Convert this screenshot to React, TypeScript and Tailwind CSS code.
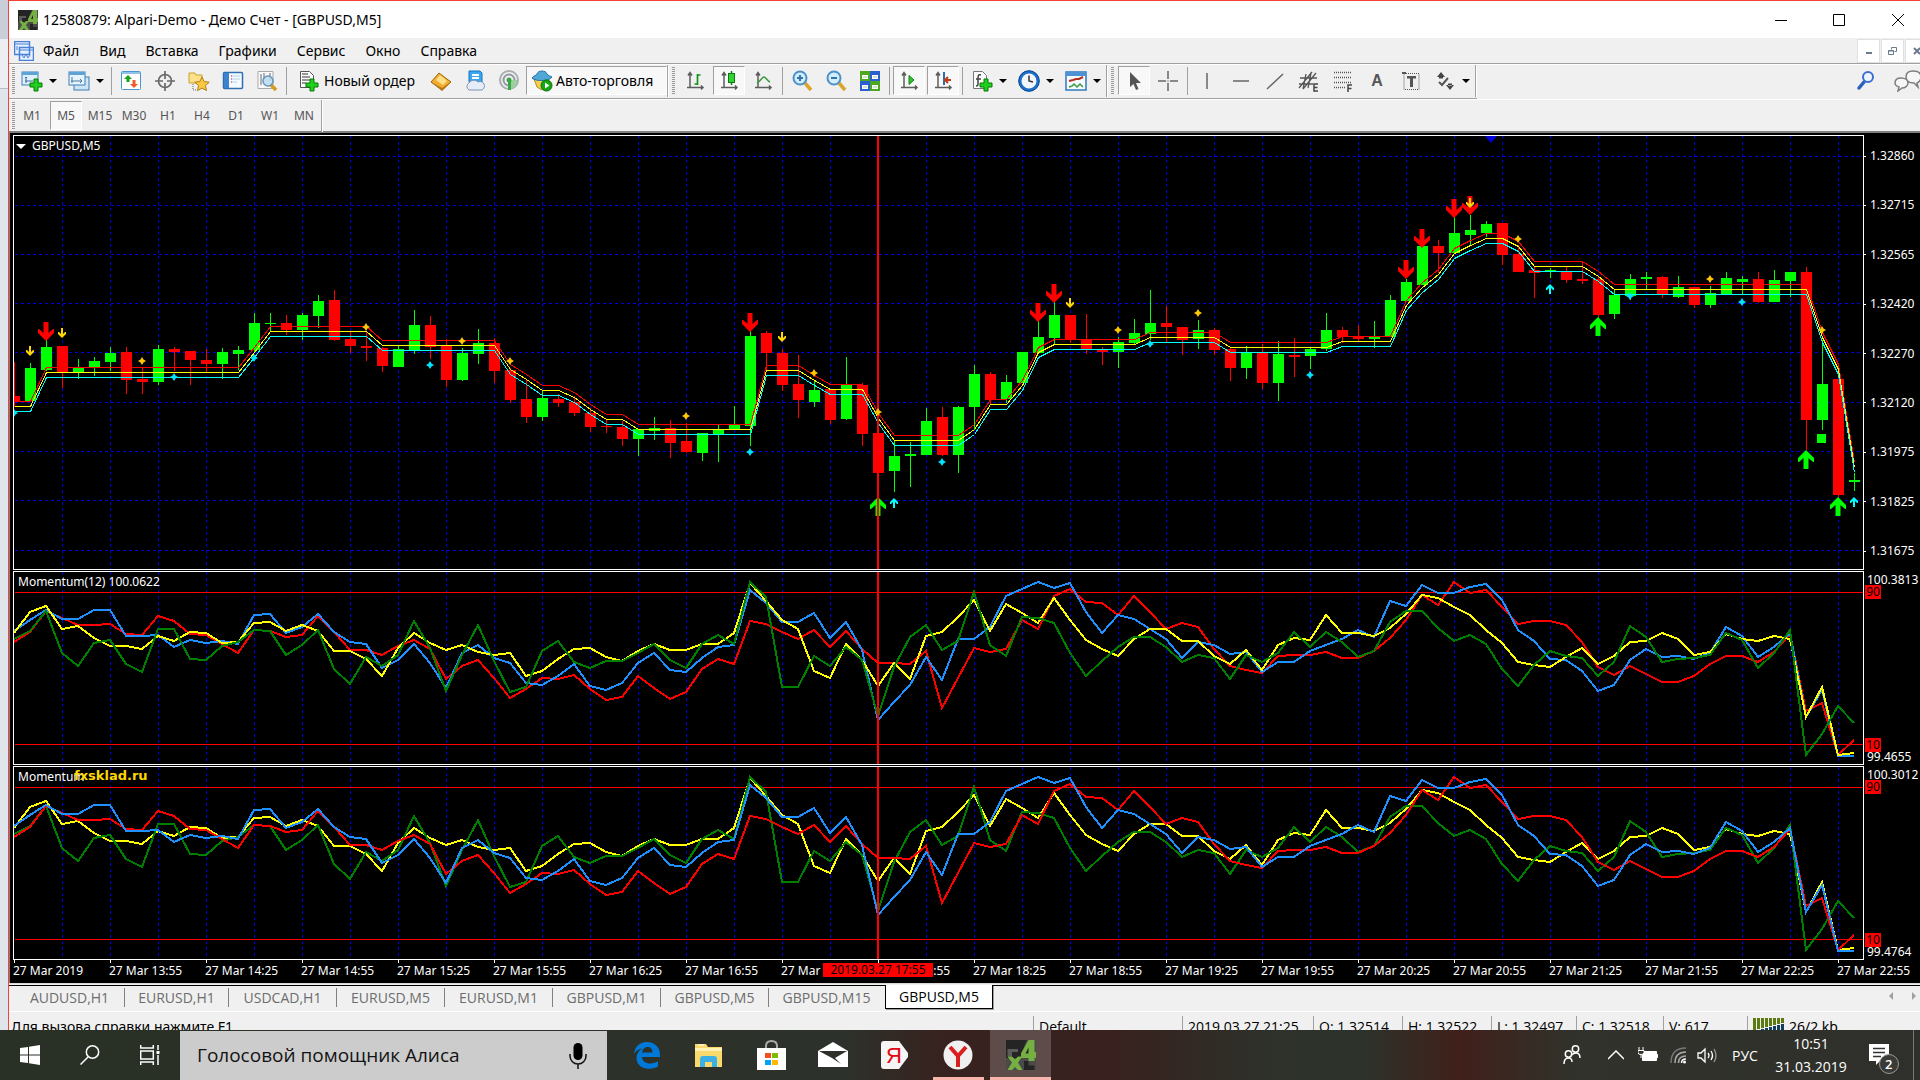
import React from "react";

type Row = [number, number, number, number, number];
type Pt = [number, number];

/* ---------- chart data ---------- */

const BAR = 16;

// up(1)/down(0), wick top, body top, body bottom, wick bottom
const candleGroups: { base: number; rows: Row[] }[] = [
  {
    base: 44,
    rows: [
      [0, 546, 648, 664, 680], [1, 549, 564, 663, 663], [1, 478, 501, 570, 572], [0, 498, 498, 577, 624],
      [1, 537, 562, 576, 597], [1, 531, 543, 562, 588], [1, 501, 519, 546, 573], [0, 501, 516, 600, 642],
      [0, 562, 597, 606, 642], [1, 495, 507, 606, 615], [0, 501, 507, 516, 573], [0, 513, 513, 540, 615],
      [0, 507, 540, 552, 577], [1, 504, 516, 552, 597], [1, 498, 510, 522, 570], [1, 399, 429, 510, 515],
      [1, 399, 429, 432, 455], [0, 405, 429, 450, 465], [1, 399, 405, 450, 480], [1, 345, 363, 408, 444],
      [0, 330, 360, 480, 483], [0, 456, 477, 498, 519], [0, 456, 498, 504, 543], [0, 501, 504, 558, 576],
      [1, 498, 507, 561, 561], [1, 390, 435, 510, 522], [0, 408, 435, 501, 537], [0, 477, 498, 600, 621],
      [1, 504, 519, 600, 603], [1, 447, 489, 522, 552], [0, 474, 489, 573, 609], [0, 564, 570, 660, 669],
      [0, 600, 657, 711, 729], [1, 633, 654, 711, 723], [0, 642, 657, 669, 681], [0, 648, 666, 699, 708],
      [0, 684, 699, 741, 756], [0, 720, 738, 741, 759], [0, 723, 741, 777, 798], [1, 747, 747, 777, 828],
    ],
  },
  {
    base: 104,
    rows: [
      [1, 531, 564, 573, 600], [0, 540, 564, 609, 654], [0, 549, 603, 636, 639], [1, 579, 579, 639, 663],
      [1, 555, 570, 585, 666], [1, 498, 555, 570, 570], [1, 270, 288, 558, 618], [0, 273, 279, 339, 390],
      [0, 327, 339, 435, 453], [0, 345, 432, 480, 534], [1, 420, 450, 486, 501], [0, 447, 447, 540, 552],
      [1, 351, 435, 537, 540], [0, 429, 435, 582, 618], [0, 579, 579, 699, 699], [1, 600, 648, 693, 756],
      [1, 606, 642, 648, 741], [1, 504, 543, 645, 645], [0, 501, 531, 645, 648], [1, 498, 501, 645, 699],
      [1, 375, 402, 501, 570], [0, 396, 402, 480, 495], [1, 405, 426, 477, 490], [1, 336, 336, 430, 430],
      [1, 243, 291, 339, 340], [1, 186, 225, 294, 312], [0, 225, 225, 297, 309], [0, 222, 297, 328, 342],
      [0, 321, 330, 336, 375], [1, 291, 306, 336, 384], [1, 237, 279, 309, 312], [1, 150, 249, 282, 300],
      [0, 198, 249, 261, 305], [0, 261, 261, 300, 345], [1, 240, 270, 297, 327], [0, 264, 270, 330, 345],
      [0, 324, 327, 384, 423], [1, 318, 339, 384, 417], [0, 312, 339, 429, 447], [1, 303, 342, 429, 483],
    ],
  },
  {
    base: -6,
    rows: [
      [0, 624, 675, 681, 741], [1, 652, 657, 678, 717], [1, 549, 600, 657, 663], [0, 591, 600, 621, 640],
      [0, 585, 620, 627, 633], [1, 573, 621, 627, 654], [1, 495, 510, 620, 620], [1, 447, 456, 513, 513],
      [1, 348, 348, 465, 465], [0, 330, 348, 369, 430], [1, 261, 309, 369, 369], [1, 255, 300, 315, 345],
      [1, 273, 282, 309, 320], [0, 279, 279, 375, 405], [0, 345, 372, 426, 426], [0, 408, 420, 429, 504],
      [1, 414, 420, 426, 444], [0, 411, 426, 450, 459], [0, 396, 447, 453, 462], [0, 440, 447, 555, 564],
      [1, 480, 495, 552, 567], [1, 432, 447, 498, 510], [1, 426, 441, 447, 480], [0, 438, 441, 495, 504],
      [1, 438, 471, 501, 504], [0, 471, 471, 525, 534], [1, 468, 489, 525, 534], [1, 426, 444, 492, 495],
      [1, 438, 447, 456, 495], [0, 426, 447, 516, 519], [1, 420, 450, 516, 516], [1, 426, 426, 453, 501],
      [0, 411, 426, 870, 960], [1, 630, 762, 870, 900], [0, 747, 747, 1095, 1101], [1, 1030, 1050, 1056, 1083],
    ],
  },
];

const candles = candleGroups.flatMap((g) =>
  g.rows.map(([up, a, b, c, d]) => ({
    up: up === 1,
    high: Math.round(g.base + a / 3),
    top: Math.round(g.base + b / 3),
    bottom: Math.round(g.base + c / 3),
    low: Math.round(g.base + d / 3),
  }))
);

// bar index, level of the middle line
const ribbon: Pt[] = [
  [0, 270], [1, 270], [2, 236], [14, 236], [15, 216], [16, 195], [22, 195], [23, 209], [30, 209], [31, 233],
  [32, 243], [33, 254], [34, 254], [35, 261], [36, 273], [37, 283], [38, 283], [39, 293], [46, 293], [47, 234],
  [49, 234], [50, 244], [51, 253], [53, 253], [54, 282], [55, 304], [59, 304], [60, 293], [61, 268], [62, 268],
  [63, 249], [64, 216], [65, 208], [70, 208], [71, 201], [75, 201], [76, 211], [82, 211], [83, 205], [86, 205],
  [87, 169], [88, 151], [89, 138], [90, 117], [91, 109], [92, 102], [93, 102], [94, 110], [95, 130], [98, 130],
  [99, 140], [100, 153], [112, 153], [113, 201], [114, 233], [115, 331],
];

const sellArrows: Pt[] = [[2, 205], [46, 196], [64, 186], [65, 167], [87, 143], [88, 112], [90, 82], [91, 79]];
const buyArrows: Pt[] = [[54, 361], [99, 181], [112, 314], [114, 361]];
const smallSell: Pt[] = [[1, 220], [3, 202], [48, 206], [66, 172], [91, 72]];
const smallBuy: Pt[] = [[55, 362], [96, 148], [115, 361]];
const goldStars: Pt[] = [
  [8, 225], [22, 191], [28, 205], [31, 225], [42, 280], [50, 237], [54, 276], [69, 194], [74, 177], [94, 103], [106, 143], [113, 194],
];
const aquaStars: Pt[] = [
  [0, 277], [10, 241], [15, 222], [26, 229], [46, 316], [58, 326], [71, 208], [81, 239], [101, 160], [108, 166],
];

const momentum = {
  blue: [
    212, 180, 150, 177, 177, 150, 150, 228, 228, 224, 260, 239, 248, 243, 252, 165, 161, 220, 200, 161, 216, 247, 252, 324, 300, 251, 308, 383, 280, 254,
    295, 310, 368, 375, 347, 311, 377, 390, 370, 308, 278, 329, 336, 293, 262, 254, 90, 130, 185, 186, 158, 235, 185, 270, 481, 427, 374, 292, 359, 237,
    237, 200, 109, 86, 66, 85, 68, 157, 218, 164, 176, 207, 238, 295, 246, 256, 282, 275, 336, 306, 306, 274, 256, 238, 209, 230, 122, 138, 76, 99,
    99, 82, 71, 120, 210, 243, 297, 300, 332, 393, 374, 299, 268, 291, 288, 296, 280, 200, 228, 291, 262, 220, 470, 390, 587, 587,
  ],
  red: [
    246, 216, 152, 175, 194, 195, 191, 221, 225, 167, 184, 222, 226, 253, 280, 210, 213, 231, 224, 167, 216, 269, 270, 285, 257, 239, 268, 357, 318, 299,
    355, 414, 386, 353, 357, 345, 386, 420, 410, 349, 385, 417, 395, 326, 296, 313, 182, 192, 217, 237, 209, 261, 214, 267, 308, 309, 312, 272, 444, 355,
    263, 276, 266, 180, 207, 108, 86, 125, 130, 165, 107, 157, 206, 190, 202, 268, 319, 331, 339, 287, 285, 285, 275, 294, 294, 272, 235, 180, 106, 135,
    66, 99, 90, 140, 192, 183, 183, 195, 247, 322, 345, 317, 341, 366, 366, 348, 311, 288, 288, 307, 275, 222, 453, 428, 585, 541,
  ],
  yellow: [
    219, 155, 137, 207, 198, 235, 257, 258, 267, 229, 243, 217, 218, 248, 247, 189, 185, 213, 194, 212, 272, 273, 297, 347, 265, 218, 248, 270, 255, 276,
    285, 278, 347, 334, 297, 267, 263, 292, 302, 272, 252, 269, 269, 253, 251, 220, 68, 122, 179, 208, 334, 354, 252, 301, 378, 308, 356, 229, 217, 170,
    121, 213, 133, 160, 190, 115, 180, 240, 267, 289, 238, 207, 207, 242, 242, 288, 313, 269, 331, 254, 234, 240, 164, 218, 219, 229, 203, 163, 104, 115,
    142, 166, 211, 250, 307, 314, 321, 291, 264, 312, 287, 245, 244, 218, 236, 286, 276, 223, 236, 243, 227, 236, 470, 380, 585, 579,
  ],
  green: [
    238, 213, 152, 279, 318, 248, 239, 313, 336, 206, 207, 296, 300, 257, 245, 209, 213, 286, 256, 209, 328, 372, 290, 319, 284, 183, 265, 392, 285, 195,
    302, 397, 380, 273, 242, 305, 324, 304, 302, 280, 251, 301, 325, 252, 224, 252, 66, 112, 381, 381, 287, 318, 262, 300, 468, 320, 232, 194, 270, 242,
    96, 254, 288, 170, 175, 189, 278, 348, 303, 261, 231, 230, 260, 305, 284, 294, 357, 284, 307, 278, 215, 261, 215, 247, 291, 273, 186, 152, 153, 205,
    242, 224, 252, 328, 378, 315, 272, 288, 294, 348, 307, 197, 232, 306, 297, 294, 285, 218, 239, 323, 278, 210, 585, 522, 439, 489,
  ],
};

const strokes = { blue: "#1e90ff", red: "#ff0000", yellow: "#ffff00", green: "#008000" };
type Series = keyof typeof momentum;

/* ---------- chart drawing ---------- */

const gridX = Array.from({ length: 38 }, (_, i) => (i + 1) * 48);
const gridY = [20, 69, 118, 167, 216, 266, 315, 364, 414];

function VerticalGrid() {
  return (
    <g stroke="#0000dc" strokeDasharray="3 3">
      {gridX.map((x) => (
        <line key={x} x1={x + 0.5} x2={x + 0.5} y1={0} y2={440} />
      ))}
    </g>
  );
}

const ribbonPoints = (shift: number) => ribbon.map(([i, y]) => `${i * BAR + 0.5},${y + shift + 0.5}`).join(" ");

const BIG = "M0 0L8-8V-12L7-12 2.500-8V-19H-2.500V-8L-7-12-8-12V-8Z";
const SMALL = "M0 0L4-4V-6H3L1-4V-10H-1V-4L-3-6H-4V-4Z";
const STAR = "M0-4L1.500-1.500 4 0 1.500 1.500 0 4-1.500 1.500-4 0-1.500-1.500Z";

function Marks({ pts, d, fill, flip }: { pts: Pt[]; d: string; fill: string; flip?: boolean }) {
  return (
    <g fill={fill}>
      {pts.map(([i, y]) => (
        <path key={i} d={d} transform={`translate(${i * BAR} ${y})${flip ? " scale(1 -1)" : ""}`} />
      ))}
    </g>
  );
}

function PriceChart() {
  return (
    <svg className="block h-full w-full" role="img" aria-label="GBPUSD M5">
      <g shapeRendering="crispEdges">
        <g stroke="#0000dc" strokeDasharray="3 3">
          {gridY.map((y) => (
            <line key={y} x1={1} x2={4000} y1={y + 0.5} y2={y + 0.5} />
          ))}
        </g>
        <VerticalGrid />
        {candles.map((c, i) => (
          <g key={i} fill={c.up ? "#00ff00" : "#ff0000"}>
            <rect x={i * BAR} y={c.high} width={1} height={Math.max(1, c.low - c.high)} />
            <rect x={i * BAR - 5} y={c.top} width={11} height={Math.max(1, c.bottom - c.top)} />
          </g>
        ))}
        <rect x={1803} y={298} width={9} height={9} fill="#00ff00" />
        <g fill="none">
          <polyline points={ribbonPoints(-5)} stroke="#ff0000" />
          <polyline points={ribbonPoints(0)} stroke="#ffff00" />
          <polyline points={ribbonPoints(5)} stroke="#00ffff" />
        </g>
      </g>
      <Marks pts={buyArrows} d={BIG} fill="#00ff00" flip />
      <rect x={863} y={0} width={2} height="100%" fill="#ff0000" />
      <Marks pts={sellArrows} d={BIG} fill="#ff0000" />
      <Marks pts={smallSell} d={SMALL} fill="#ffd700" />
      <Marks pts={smallBuy} d={SMALL} fill="#00ffff" flip />
      <Marks pts={goldStars} d={STAR} fill="#ffc800" />
      <Marks pts={aquaStars} d={STAR} fill="#00e5ff" />
      <path d="M1471 0H1483L1477 7Z" fill="#0000dc" />
    </svg>
  );
}

function MomentumChart({ order, label }: { order: Series[]; label: string }) {
  return (
    <svg className="block h-full w-full" role="img" aria-label={label}>
      <g shapeRendering="crispEdges" fill="none">
        <VerticalGrid />
        <rect x={1} y={20} width="100%" height={1} fill="#ff0000" />
        <rect x={1} y={172} width="100%" height={1} fill="#ff0000" />
        {order.map((name) => (
          <polyline
            key={name}
            points={momentum[name].map((v, i) => `${i * BAR},${Math.round(v / 3) - 12}`).join(" ")}
            stroke={strokes[name]}
            strokeWidth={2}
          />
        ))}
        <rect x={863} y={0} width={2} height="100%" fill="#ff0000" />
      </g>
    </svg>
  );
}

function LevelTag({ children }: { children: string }) {
  return <span className="-ml-0.5 flex h-3.5 w-4 items-center justify-center bg-[#ff0000] text-[12px] text-black">{children}</span>;
}

function MomentumAxis({ max, min }: { max: string; min: string }) {
  return (
    <div className="flex w-14 shrink-0 flex-col justify-between pt-1 pb-[3px] pl-[3px] leading-[10px]">
      <div>
        <div>{max}</div>
        <LevelTag>90</LevelTag>
      </div>
      <div>
        <LevelTag>10</LevelTag>
        <div>{min}</div>
      </div>
    </div>
  );
}

const prices = ["1.32860", "1.32715", "1.32565", "1.32420", "1.32270", "1.32120", "1.31975", "1.31825", "1.31675"];
const times = [
  "2019", "13:55", "14:25", "14:55", "15:25", "15:55", "16:25", "16:55", "17:25", "17:55",
  "18:25", "18:55", "19:25", "19:55", "20:25", "20:55", "21:25", "21:55", "22:25", "22:55",
];

/* ---------- toolbar icons ---------- */

const Svg = ({ children }: { children: React.ReactNode }) => (
  <svg width={22} height={22} viewBox="0 0 22 22" fill="none" className="shrink-0">
    {children}
  </svg>
);

const Plus = ({ x, y }: { x: number; y: number }) => (
  <path transform={`translate(${x} ${y})`} d="M4 0h4v4h4v4H8v4H4V8H0V4h4z" fill="#1fd01f" stroke="#067a06" />
);

const Axes = () => <path d="M6 3v15M3 17.500h16M4 5.500l2-3 2 3M17 15.500l2 2-2 2" stroke="#5c5c5c" strokeWidth={1.500} />;

const icons: Record<string, React.ReactNode> = {
  newChart: (
    <Svg>
      <rect x={1} y={2} width={16} height={13} fill="#dff0fc" stroke="#3b7fb5" />
      <path d="M1 2h16v3H1z" fill="#5ea3d6" />
      <path d="M5 7v6M4 11h8M4 8l1-1 1 1" stroke="#3b6f95" />
      <Plus x={9} y={9} />
    </Svg>
  ),
  profiles: (
    <Svg>
      <rect x={6} y={7} width={15} height={13} fill="#cfe4f5" stroke="#3b7fb5" />
      <rect x={1} y={2} width={16} height={13} fill="#e8f4fd" stroke="#3b7fb5" />
      <path d="M1 2h16v3H1z" fill="#5ea3d6" />
      <path d="M4 7v6M3 11h11M12 9l2 2-2 2" stroke="#48789c" />
    </Svg>
  ),
  market: (
    <Svg>
      <rect x={1.500} y={1.500} width={19} height={18} rx={1} fill="#fff" stroke="#4e96cf" />
      <path d="M2 2h18v2H2z" fill="#8fc3ea" />
      <path d="M8 5l4 4H9.500v3h-3V9H4z" fill="#19a319" />
      <path d="M14 18l4-4h-2.500v-4h-3v4H10z" fill="#ef5a28" />
    </Svg>
  ),
  cross: (
    <Svg>
      <circle cx={11} cy={11} r={6.500} stroke="#6a6a6a" strokeWidth={1.700} />
      <path d="M11 1v8M11 13v8M1 11h8M13 11h8" stroke="#6a6a6a" strokeWidth={1.700} />
    </Svg>
  ),
  navigator: (
    <Svg>
      <path d="M1 3h6l1 2h6v8H1z" fill="#ffe08a" stroke="#caa032" />
      <path d="M5 14v6h3" stroke="#6b6b6b" strokeDasharray="1 1" />
      <path d="M14 7l2.200 4.600 5 .6-3.700 3.400 1 5-4.500-2.500-4.500 2.500 1-5-3.700-3.400 5-.6z" fill="#fbc844" stroke="#b37f12" />
    </Svg>
  ),
  terminal: (
    <Svg>
      <rect x={1.500} y={2.500} width={19} height={16} rx={1} fill="#f4faff" stroke="#2d6fb0" strokeWidth={1.500} />
      <path d="M2 3h5v15H2z" fill="#3c82cc" />
      <path d="M9 6h9M9 9h9M9 12h6" stroke="#b5d0e8" />
      <path d="M9 6h1M9 9h1M9 12h1" stroke="#c33" />
    </Svg>
  ),
  tester: (
    <Svg>
      <path d="M2 1.500h15v17H2z" fill="#fafafa" stroke="#aaa" />
      <path d="M5 4v11M8 3v6M14 3v8" stroke="#667" />
      <path d="M15 15l5 5" stroke="#d49b1f" strokeWidth={3.500} />
      <circle cx={12} cy={11} r={5} fill="#b8dcf5" fillOpacity={0.85} stroke="#6a93b5" strokeWidth={1.500} />
    </Svg>
  ),
  order: (
    <Svg>
      <path d="M3.500 1.500h9l4 4v12h-13z" fill="#fbfbfb" stroke="#555" />
      <path d="M5 4h6M5 7h8M5 10h8M5 13h4" stroke="#777" strokeWidth={1.500} />
      <Plus x={9} y={9} />
    </Svg>
  ),
  editor: (
    <Svg>
      <path d="M1 12l8-9 12 9-9 8z" fill="#efae2f" stroke="#9c6508" />
      <path d="M1 12l11 6 9-6-9 9z" fill="#b87510" />
      <path d="M6 10l4-5 7 6-4 4z" fill="#ffdf8a" />
    </Svg>
  ),
  cloud: (
    <Svg>
      <path d="M5 1h11l2 2v9H5z" fill="#39a8f2" stroke="#1474bd" />
      <path d="M8 5h7M8 8h7" stroke="#fff" strokeWidth={2} />
      <path d="M5 20a4 4 0 0 1 0-7 5 4 0 0 1 9-1 4 4 0 0 1 4 8z" fill="#e4edf8" stroke="#7d93b5" />
    </Svg>
  ),
  signals: (
    <Svg>
      <circle cx={11} cy={10} r={9} stroke="#a9aeb3" strokeWidth={2} />
      <circle cx={11} cy={10} r={5.500} stroke="#93999e" strokeWidth={2} />
      <path d="M13 10h6a8 8 0 0 1-6 9z" fill="#9ccf9e" />
      <circle cx={11} cy={10} r={2.500} fill="#3aa745" />
      <path d="M10 11h3v9h-3z" fill="#3aa745" />
    </Svg>
  ),
  auto: (
    <Svg>
      <path d="M3 9h15l-2 7-5 4-5-3z" fill="#f7cf55" stroke="#b58a1c" />
      <path d="M1 8c2-3 4-2 5-4 1-4 9-4 10 0 1 2 4 2 5 3-2 4-16 5-20 1z" fill="#4fa7d8" stroke="#2475a3" />
      <circle cx={15.500} cy={15.500} r={5.500} fill="#12a812" stroke="#0a6f0a" />
      <path d="M14 12.500l4.500 3-4.500 3z" fill="#fff" />
    </Svg>
  ),
  bars: (
    <Svg>
      <Axes />
      <path d="M13.500 4v11M13.500 5h3M10.500 14h3" stroke="#149414" strokeWidth={1.700} />
    </Svg>
  ),
  candlesIcon: (
    <Svg>
      <Axes />
      <path d="M13.500 1v14" stroke="#0f7a0f" strokeWidth={1.500} />
      <rect x={10.500} y={3.500} width={6} height={9} fill="#2fd52f" stroke="#0f7a0f" />
    </Svg>
  ),
  line: (
    <Svg>
      <Axes />
      <path d="M5 13c4-2 5-6 7-6s3 4 6 5" stroke="#3c9a3c" strokeWidth={1.500} />
    </Svg>
  ),
  zoomIn: (
    <Svg>
      <path d="M14 13l6 7" stroke="#d9a62b" strokeWidth={3.500} />
      <circle cx={9} cy={8} r={6.500} fill="#d5ecfb" stroke="#4a92c9" strokeWidth={2} />
      <path d="M9 5v6M6 8h6" stroke="#2d76ad" strokeWidth={2} />
    </Svg>
  ),
  zoomOut: (
    <Svg>
      <path d="M14 13l6 7" stroke="#d9a62b" strokeWidth={3.500} />
      <circle cx={9} cy={8} r={6.500} fill="#d5ecfb" stroke="#4a92c9" strokeWidth={2} />
      <path d="M6 8h6" stroke="#2d76ad" strokeWidth={2} />
    </Svg>
  ),
  tiles: (
    <Svg>
      <path d="M1 1h10v10H1zM11 11h10v10H11z" fill="#4ca81e" />
      <path d="M11 1h10v10H11zM1 11h10v10H1z" fill="#2a5fd0" />
      <path d="M3 5h6v4H3zM13 5h6v4h-6zM3 15h6v4H3zM13 15h6v4h-6z" fill="#fff" />
      <path d="M4 7h4M14 7h4M4 17h4M14 17h4" stroke="#a8c8a0" />
    </Svg>
  ),
  scroll: (
    <Svg>
      <Axes />
      <path d="M11 5.500l5 4.500-5 4.500z" fill="#2fc52f" stroke="#128212" />
    </Svg>
  ),
  shift: (
    <Svg>
      <Axes />
      <path d="M12 2v13" stroke="#2a6fb0" strokeWidth={2} />
      <path d="M19 10h-6M16 7l-3 3 3 3" stroke="#c23b12" strokeWidth={2} />
    </Svg>
  ),
  indicators: (
    <Svg>
      <path d="M2.500 1.500h9l4 4v13h-13z" fill="#fbfbfb" stroke="#777" />
      <path d="M10 5c-3-1-3 1-3 4v5c0 2-1 2-2 2M5 9h5" stroke="#444" strokeWidth={1.500} />
      <Plus x={9} y={9} />
    </Svg>
  ),
  clock: (
    <Svg>
      <circle cx={11} cy={11} r={9} fill="#f2f7fb" stroke="#1d6fc7" strokeWidth={3} />
      <circle cx={11} cy={11} r={10.300} stroke="#0b4a94" />
      <path d="M11 5.500V11l4 1" stroke="#333" strokeWidth={1.500} />
    </Svg>
  ),
  templates: (
    <Svg>
      <rect x={1} y={2} width={20} height={18} fill="#f5faff" stroke="#2f78bd" strokeWidth={1.500} />
      <path d="M1 2h20v4H1z" fill="#4d93d3" />
      <path d="M4 11l4-1 3-1 3 0 4-2" stroke="#b5311b" strokeWidth={2} />
      <path d="M4 17l3-1 2-2 3 3 3-3 3 3" stroke="#3c9a3c" strokeWidth={1.500} />
    </Svg>
  ),
  cursor: (
    <Svg>
      <path d="M7 2v15l3.500-3 2.500 6 2.500-1-2.500-6h5z" fill="#555" />
    </Svg>
  ),
  plusCross: (
    <Svg>
      <path d="M11 1v8M11 13v8M1 11h8M13 11h8M11 10.500v1" stroke="#666" strokeWidth={1.500} />
    </Svg>
  ),
  vline: <Svg><path d="M11 3v16" stroke="#666" strokeWidth={1.500} /></Svg>,
  hline: <Svg><path d="M3 11h16" stroke="#666" strokeWidth={1.500} /></Svg>,
  trend: <Svg><path d="M3 19L19 4" stroke="#666" strokeWidth={1.500} /></Svg>,
  channel: (
    <Svg>
      <path d="M1 18L14 2M5 19L18 3M2 8h17M1 14h14M8 4l-3 15M13 3l-3 15" stroke="#555" strokeWidth={1.300} />
      <path d="M20 14h-4v7h4M16 17.500h3.500" stroke="#444" strokeWidth={1.500} />
    </Svg>
  ),
  fibo: (
    <Svg>
      <path d="M2 2.500h18M2 7.500h18M2 12.500h18M2 17.500h11" stroke="#555" strokeWidth={1.500} strokeDasharray="1 1" />
      <path d="M16 22v-7h4M16 18.500h3.500" stroke="#444" strokeWidth={1.500} />
    </Svg>
  ),
  label: (
    <Svg>
      <path d="M4 3.500h15v16H4z" stroke="#555" strokeDasharray="1 1" />
      <path d="M2 2h4v2H2zM7 6h9v2.500h-3V17h-3V8.500H7z" fill="#555" />
    </Svg>
  ),
  shapes: (
    <Svg>
      <path d="M7 2l4 5H3zM5 6.500h4v2H5zM16 20l4-5h-8zM14 13.500h4v2h-4z" fill="#444" />
      <path d="M5 12l3 3 6-7" stroke="#555" strokeWidth={2} />
    </Svg>
  ),
};

/* ---------- small controls ---------- */

const Caret = () => <span className="h-0 w-0 border-x-4 border-t-4 border-x-transparent border-t-black" />;

function Tool({ icon, name, pressed, caret }: { icon: string; name: string; pressed?: boolean; caret?: boolean }) {
  return (
    <button
      aria-label={name}
      className={
        "flex h-[29px] shrink-0 items-center justify-center " +
        (caret ? "w-[47px] gap-1.5 " : "mx-px w-8 ") +
        (pressed ? "border border-t-[#a0a0a0] border-r-white border-b-white border-l-[#a0a0a0] bg-[#f8f8f8]" : "")
      }
    >
      {icons[icon]}
      {caret && <Caret />}
    </button>
  );
}

const Sep = () => <span className="mx-0.5 h-7 w-px shrink-0 bg-[#a0a0a0]" />;
const Grip = ({ tight }: { tight?: boolean }) => (
  <span
    className={"ml-[3px] h-[27px] w-[3px] shrink-0 bg-[repeating-linear-gradient(#9a9a9a_0_1px,#f0f0f0_1px_2px)] " + (tight ? "" : "mr-[3px]")}
  />
);
const BarEnd = () => <span className="h-8 w-0.5 shrink-0 border-l border-[#a0a0a0] bg-white" />;

function Logo({ className }: { className: string }) {
  return (
    <svg className={className} viewBox="0 0 20 20">
      <path d="M0 0h20v20H0z" fill="#4a4a48" />
      <path d="M0 0h14l-4 9h3v3H0z" fill="#242424" />
      <path d="M1 6h7v2H4v3H1z" fill="#5c5c5a" />
      <path d="M15 0h4v8h1v4h-1v2h-4v-2h-5V9z" fill="#76b043" />
      <path d="M15 5v4h-2z" fill="#242424" />
      <path d="M1 11h3l2 2 2-2h3l-3 4 3 5H8l-2-2-2 2H1l3-5z" fill="#76b043" />
      <path d="M12 14h3v3h4v3h-7z" fill="#242424" />
    </svg>
  );
}

const menu = ["Файл", "Вид", "Вставка", "Графики", "Сервис", "Окно", "Справка"];
const frames = ["M1", "M5", "M15", "M30", "H1", "H4", "D1", "W1", "MN"];
const tabs: [string, string][] = [
  ["AUDUSD,H1", "w-[114px] pl-1"], ["EURUSD,H1", "w-[104px]"], ["USDCAD,H1", "w-[108px]"], ["EURUSD,M5", "w-[108px]"],
  ["EURUSD,M1", "w-[108px]"], ["GBPUSD,M1", "w-[108px]"], ["GBPUSD,M5", "w-[108px]"], ["GBPUSD,M15", "w-[116px]"],
];
const status: [string, string][] = [
  ["Default", "w-[149px]"], ["2019.03.27 21:25", "w-[131px]"], ["O: 1.32514", "w-[89px]"], ["H: 1.32522", "w-[89px]"],
  ["L: 1.32497", "w-[85px]"], ["C: 1.32518", "w-[87px]"], ["V: 617", "w-[84px]"],
];

/* ---------- page ---------- */

export default function App() {
  return (
    <div className="flex h-screen flex-col overflow-hidden bg-[#f0f0f0] font-['Noto_Sans',sans-serif] text-black">
      <div className="flex min-h-0 flex-1">
        <div className="flex w-2 shrink-0 flex-col bg-[#dfe5ea]">
          <div className="h-[39px] bg-[#c9ced8]" />
          <div className="h-[50px] border-b border-[#b9bec6] bg-[#eceff2]" />
        </div>
        <div className="flex min-w-0 flex-1 flex-col border-t border-l border-[#f44336]">
          <header className="flex h-[37px] shrink-0 items-center bg-white pl-[9px]">
            <Logo className="h-5 w-5" />
            <h1 className="pl-[5px] text-[14px]">12580879: Alpari-Demo - Демо Счет - [GBPUSD,M5]</h1>
            <div className="-mr-2 ml-auto flex">
              <button aria-label="Свернуть" className="flex w-[58px] justify-center">
                <svg width="12" height="12" className="block"><path d="M0 6h12v1H0z" /></svg>
              </button>
              <button aria-label="Развернуть" className="flex w-[58px] justify-center">
                <svg width="12" height="12" className="block"><path d="M.5.5h11v11H.5z" fill="none" stroke="#000" /></svg>
              </button>
              <button aria-label="Закрыть" className="flex w-[60px] justify-center">
                <svg width="12" height="12" className="block"><path d="M0 0l12 12M12 0L0 12" fill="none" stroke="#000" /></svg>
              </button>
            </div>
          </header>

          <nav className="flex h-[26px] shrink-0 items-center border-b border-[#a0a0a0] pl-[5px]">
            <svg width="20" height="20" viewBox="0 0 20 20" fill="#e6f0ff" stroke="#4a80d8">
              <path d="M.5.500h15v13H.500zM5.500 6.500h14v13h-14z" strokeWidth="1.500" />
              <path d="M.500 3h15M5.500 9h14M3 5v4M8 14l2 3 2-4 2 4 2-3" fill="none" />
            </svg>
            <div className="flex gap-5 pl-[9px] text-[14px]">
              {menu.map((m) => (
                <button key={m}>{m}</button>
              ))}
            </div>
            <div className="ml-auto flex h-6 shrink-0 gap-px">
              <button aria-label="Свернуть график" className="flex w-[23px] items-center justify-center border border-[#e0e0e0] bg-white">
                <svg width="8" height="8"><path d="M1 5h6v2H1z" fill="#6b7a8d" /></svg>
              </button>
              <button aria-label="Восстановить график" className="flex w-[23px] items-center justify-center border border-[#e0e0e0] bg-white">
                <svg width="9" height="8" fill="none" stroke="#6b7a8d"><path d="M3.500 2.500v-2h5v4h-2M.5 3.500h5v4h-5zM.5 4h5" /></svg>
              </button>
              <button aria-label="Закрыть график" className="-mr-2 flex w-[23px] items-center justify-center border border-[#e0e0e0] bg-white">
                <svg width="8" height="8"><path d="M1 1l6 6M7 1L1 7" stroke="#6b7a8d" strokeWidth="2" /></svg>
              </button>
            </div>
          </nav>

          <div className="flex h-[35px] shrink-0 items-start border-t border-white">
            <div className="flex h-[34px] items-center border-b border-[#a0a0a0] pb-0.5">
              <Grip tight />
              <Tool icon="newChart" name="Новый график" caret />
              <Tool icon="profiles" name="Профили" caret />
              <Sep />
              <Tool icon="market" name="Обзор рынка" />
              <Tool icon="cross" name="Окно данных" />
              <Tool icon="navigator" name="Навигатор" />
              <Tool icon="terminal" name="Терминал" />
              <Tool icon="tester" name="Тестер" />
              <Sep />
              <button className="flex h-[29px] w-[135px] shrink-0 items-center gap-[5px] pl-2 text-[14px] whitespace-nowrap">
                {icons.order}
                Новый ордер
              </button>
              <Tool icon="editor" name="Редактор" />
              <Tool icon="cloud" name="Хостинг" />
              <Tool icon="signals" name="Сигналы" />
              <button className="flex h-[29px] w-[141px] shrink-0 items-center gap-[3px] border border-t-[#a0a0a0] border-r-white border-b-white border-l-[#a0a0a0] bg-[#f8f8f8] pl-1 text-[14px] whitespace-nowrap">
                {icons.auto}
                Авто-торговля
              </button>
              <BarEnd />
              <Grip />
              <Tool icon="bars" name="Бары" />
              <Tool icon="candlesIcon" name="Свечи" pressed />
              <Tool icon="line" name="Линия" />
              <Sep />
              <Tool icon="zoomIn" name="Увеличить" />
              <Tool icon="zoomOut" name="Уменьшить" />
              <Tool icon="tiles" name="Окна плиткой" />
              <Sep />
              <Tool icon="scroll" name="Автопрокрутка" pressed />
              <Tool icon="shift" name="Сдвиг графика" pressed />
              <Sep />
              <Tool icon="indicators" name="Индикаторы" caret />
              <Tool icon="clock" name="Периоды" caret />
              <Tool icon="templates" name="Шаблоны" caret />
              <BarEnd />
              <Grip />
              <Tool icon="cursor" name="Курсор" pressed />
              <Tool icon="plusCross" name="Перекрестие" />
              <Sep />
              <Tool icon="vline" name="Вертикальная линия" />
              <Tool icon="hline" name="Горизонтальная линия" />
              <Tool icon="trend" name="Трендовая линия" />
              <Tool icon="channel" name="Канал" />
              <Tool icon="fibo" name="Фибоначчи" />
              <button className="mx-px h-[29px] w-8 shrink-0 font-['Liberation_Sans',sans-serif] text-[16px] font-bold text-[#555]">A</button>
              <Tool icon="label" name="Метка" />
              <Tool icon="shapes" name="Стрелки" caret />
              <BarEnd />
            </div>
            <div className="ml-auto flex h-8 shrink-0 items-center gap-4">
              <button aria-label="Поиск">
                <svg width="22" height="22" viewBox="0 0 22 22" fill="none">
                  <path d="M9 12l-5 6" stroke="#2b5fc0" strokeWidth="3.500" strokeLinecap="round" />
                  <circle cx="13" cy="7" r="5" stroke="#3a6fd0" strokeWidth="2" fill="#eef4ff" />
                </svg>
              </button>
              <button aria-label="Чат" className="-mr-0.5">
                <svg width="29" height="22" viewBox="0 0 29 22" fill="#f6f6f6" stroke="#7d7d7d" strokeWidth="1.500">
                  <path d="M20 1c5 0 8 2 8 6s-2 5-4 6l1 4-4-4c-5 0-8-2-8-6s2-6 7-6z" />
                  <path d="M8 8c4 0 7 2 7 5s-3 5-6 5l-4 3 1-4c-3-1-4-2-4-4 0-3 2-5 6-5z" />
                </svg>
              </button>
            </div>
          </div>

          <div className="flex h-[34px] shrink-0 items-center border-t border-b-2 border-t-white border-b-[#808080] text-[12px] text-[#555]">
            <Grip tight />
            {frames.map((f) => (
              <button
                key={f}
                className={
                  "mx-px h-[29px] w-8 shrink-0 " +
                  (f === "M5" ? "border border-t-[#a0a0a0] border-r-white border-b-white border-l-[#a0a0a0] bg-[#f8f8f8]" : "")
                }
              >
                {f}
              </button>
            ))}
            <BarEnd />
          </div>

          <main className="flex min-h-0 flex-1 flex-col border-l border-[#808080] bg-black pt-0.5 pl-[3px] text-[12px] text-white">
            <section className="flex min-h-0 flex-[435]">
              <div className="relative min-w-0 flex-1 overflow-hidden border border-white">
                <PriceChart />
                <div className="absolute top-0.5 left-0.5 flex items-center gap-1.5 leading-4">
                  <span className="h-0 w-0 border-x-[5px] border-t-[5px] border-x-transparent border-t-white" />
                  GBPUSD,M5
                </div>
              </div>
              <div className="flex w-14 shrink-0 flex-col justify-between pt-4 pb-3.5 leading-[10px]">
                {prices.map((p) => (
                  <div key={p} className="flex items-center gap-1">
                    <span className="h-px w-0.5 bg-white" />
                    {p}
                  </div>
                ))}
              </div>
            </section>
            <section className="mt-px flex min-h-0 flex-[194]">
              <div className="relative min-w-0 flex-1 overflow-hidden border border-white">
                <MomentumChart order={["red", "blue", "yellow", "green"]} label="Momentum 1" />
                <div className="absolute top-0.5 left-1 leading-4">Momentum(12) 100.0622</div>
              </div>
              <MomentumAxis max="100.3813" min="99.4655" />
            </section>
            <section className="mt-px flex min-h-0 flex-[194]">
              <div className="relative min-w-0 flex-1 overflow-hidden border border-white">
                <MomentumChart order={["yellow", "green", "red", "blue"]} label="Momentum 2" />
                <div className="absolute top-0.5 left-1 leading-4">Momentum</div>
                <a href="#fxsklad" className="absolute top-px left-[60px] font-['DejaVu_Sans',sans-serif] text-[13px] leading-4 font-bold text-[#ffd700]">
                  fxsklad.ru
                </a>
              </div>
              <MomentumAxis max="100.3012" min="99.4764" />
            </section>
            <div className="relative flex h-[23px] shrink-0 overflow-hidden">
              {times.map((t) => (
                <div key={t} className="w-24 shrink-0 whitespace-nowrap">
                  <div className="ml-px h-[3px] w-px bg-white" />
                  <div className="leading-4">27 Mar {t}</div>
                </div>
              ))}
              <div className="absolute top-[3px] left-[810px] w-[110px] bg-[#ff0000] text-center leading-3.5 text-black">2019.03.27 17:55</div>
            </div>
          </main>

          <div className="flex h-7 shrink-0 border-t border-[#d8d8d8] pt-px">
            <div className="flex h-[25px] flex-1 items-start border-t border-black pl-0.5 font-['Open_Sans','Noto_Sans',sans-serif] text-[14px] text-[#6d6d6d]">
              {tabs.map(([t, w], i) => (
                <button key={t + i} className={"mt-0.5 h-[19px] shrink-0 border-r leading-[19px] " + w + (i === 7 ? " border-transparent" : " border-[#808080]")}>
                  {t}
                </button>
              ))}
              <button className="-mt-px h-6 w-[108px] shrink-0 border border-t-0 border-black bg-white text-black shadow-[1px_1px_0_#a0a0a0]">GBPUSD,M5</button>
              <div className="mt-1.5 mr-1 ml-auto flex gap-[19px]">
                <button aria-label="Назад" className="h-0 w-0 border-y-4 border-r-4 border-y-transparent border-r-[#a0a0a0]" />
                <button aria-label="Вперед" className="h-0 w-0 border-y-4 border-l-4 border-y-transparent border-l-[#a0a0a0]" />
              </div>
            </div>
          </div>

          <footer className="flex h-[19px] shrink-0 overflow-hidden border-t border-white text-[14px] leading-[30px] whitespace-nowrap">
            <div className="flex-1 pl-0.5">Для вызова справки нажмите F1</div>
            {status.map(([t, w]) => (
              <div key={t} className={"mt-1 shrink-0 border-l border-[#a0a0a0] pl-[5px] font-['Open_Sans','Noto_Sans',sans-serif] leading-[22px] " + w}>
                {t}
              </div>
            ))}
            <div className="mt-1 flex w-[173px] shrink-0 gap-1 border-l border-[#a0a0a0] pl-[5px] leading-[22px]">
              <svg width="32" height="20" className="mt-[2px]">
                {[0, 1, 2, 3, 4, 5, 6, 7].map((i) => (
                  <g key={i}>
                    <rect x={i * 4} y={0} width={3} height={12 - i} fill="#5b7a12" />
                    <rect x={i * 4} y={13 - i} width={3} height={20} fill="#123f5e" />
                  </g>
                ))}
              </svg>
              26/2 kb
            </div>
          </footer>
        </div>
      </div>

      <Taskbar />
    </div>
  );
}

function Taskbar() {
  return (
    <div className="flex h-[50px] shrink-0 bg-[linear-gradient(90deg,#293025_0%,#2d312b_44%,#37221f_49%,#38211e_58%,#2d312a_66%,#2c322a_71%,#41201b_76%,#30322b_82%,#2f302b_100%)] font-['Open_Sans','Noto_Sans',sans-serif] text-white">
      <button aria-label="Пуск" className="flex w-[60px] items-center justify-center">
        <svg width="20" height="20" fill="#fff"><path d="M0 3l8-1v7.500H0zM9 1.800L20 0v9.500H9zM0 10.500h8V18l-8-1zM9 10.500h11V20L9 18.200z" /></svg>
      </button>
      <button aria-label="Поиск" className="flex w-[60px] items-center justify-center">
        <svg width="20" height="20" fill="none" stroke="#fff" strokeWidth="1.500"><circle cx="12.500" cy="7" r="6.200" /><path d="M8 12l-7.500 7.500" /></svg>
      </button>
      <button aria-label="Представление задач" className="flex w-[60px] items-center justify-center">
        <svg width="20" height="20" fill="none" stroke="#fff" strokeWidth="1.500">
          <path d="M.7 0v3h12.600V0M.7 20v-3h12.600v3M.7 6h12.600v8H.700zM18 0v5M18 10v10" />
          <path d="M16.500 6h3v3h-3z" fill="#fff" stroke="none" />
        </svg>
      </button>
      <div className="mt-px flex w-[427px] items-center bg-[#cccccc] pr-5 pl-[17px]">
        <input
          aria-label="Голосовой помощник"
          placeholder="Голосовой помощник Алиса"
          className="min-w-0 flex-1 bg-transparent text-[19px] text-black outline-none placeholder:text-black placeholder:opacity-90"
        />
        <button aria-label="Микрофон">
          <svg width="18" height="28" viewBox="0 0 18 28" fill="none" stroke="#111" strokeWidth="1.500">
            <rect x="4.500" y="1" width="9" height="17" rx="4.500" fill="#000" stroke="none" />
            <path d="M1 12v2a8 8 0 0 0 16 0v-2M9 22v5" />
          </svg>
        </button>
      </div>
      <button aria-label="Edge" className="ml-[9px] flex w-[62px] items-center justify-center">
        <svg width="28" height="28" viewBox="0 0 28 28" fill="#0078d7">
          <path d="M1 13C2 5 7 1 14 1c8 0 13 6 13 12v3H9c0 4 4 6.500 8 6.500 3 0 6-1 8-2.200v5.200c-3 1.600-6 2.200-9 2.200C8 27.700 3.500 23 3.500 17c0-4 2-7.500 6-9.500C5.500 8 2.500 10 1 13zm8-1.500h10.500C19.500 8 17.500 6 14.500 6S9.500 8.500 9 11.500z" />
        </svg>
      </button>
      <button aria-label="Проводник" className="flex w-[62px] items-center justify-center">
        <svg width="28" height="26">
          <path d="M0 2h11l2 3h14v20H0z" fill="#f9d86c" />
          <path d="M0 6h27v3H0z" fill="#fff0b3" />
          <path d="M3 3h6" stroke="#fff" />
          <path d="M5 25v-8q0-3 3-3h11q3 0 3 3v8h-5v-5h-7v5z" fill="#3cb0e5" />
        </svg>
      </button>
      <button aria-label="Магазин" className="flex w-[62px] items-center justify-center">
        <svg width="29" height="30">
          <path d="M9 9V6q0-5 5.500-5T20 6v3" fill="none" stroke="#aaa" strokeWidth="2" />
          <path d="M0 8h29v22H0z" fill="#fff" />
          <path d="M8 13h6v5H8z" fill="#f25022" /><path d="M15 13h6v5h-6z" fill="#7fba00" />
          <path d="M8 20h6v5H8z" fill="#00a4ef" /><path d="M15 20h6v5h-6z" fill="#ffb900" />
        </svg>
      </button>
      <button aria-label="Почта" className="flex w-[62px] items-center justify-center">
        <svg width="30" height="26"><path d="M0 9L15 0l15 9v16H0z" fill="#fff" /><path d="M1 9h28l-12 7 6 6-9-6z" fill="#30302b" /></svg>
      </button>
      <button aria-label="Яндекс" className="flex w-[62px] items-center justify-center">
        <svg width="28" height="28">
          <path d="M3 0h15l9 12v4l-9 12H3q-3 0-3-3V3q0-3 3-3z" fill="#f5f5f5" />
          <text x="5" y="22" fontSize="22" fill="#e30613" fontFamily="Liberation Sans, sans-serif">Я</text>
        </svg>
      </button>
      <button aria-label="Яндекс Браузер" className="flex w-16 flex-col items-center justify-end gap-[7px]">
        <svg width="30" height="30">
          <circle cx="15" cy="15" r="14.500" fill="#f0f0f0" />
          <path d="M7 7l8 9 8-9M15 16v11" fill="none" stroke="#d81e1e" strokeWidth="4" />
        </svg>
        <span className="h-[3px] w-[51px] bg-[#f9b4ac]" />
      </button>
      <button aria-label="MetaTrader" className="flex w-[61px] flex-col items-center justify-end gap-[7px] bg-[#5e4c4a]">
        <Logo className="h-[30px] w-[30px]" />
        <span className="h-[3px] w-full bg-[#f9b4ac]" />
      </button>

      <div className="ml-auto flex items-center">
        <button aria-label="Люди" className="w-[45px]">
          <svg width="18" height="20" viewBox="0 0 18 20" fill="none" stroke="#fff" strokeWidth="1.500">
            <circle cx="12.500" cy="4" r="3.200" /><circle cx="5.500" cy="9" r="3.200" />
            <path d="M1 19c0-4 2-6 4.500-6S9 15 9 17M9 10c1-2 2-2 4-2 3 0 4 2 4 5" />
          </svg>
        </button>
        <button aria-label="Скрытые значки" className="w-[30px]">
          <svg width="16" height="10" fill="none" stroke="#fff" strokeWidth="1.500"><path d="M0 9l8-8 8 8" /></svg>
        </button>
        <button aria-label="Батарея" className="w-8">
          <svg width="20" height="16">
            <path d="M4.500 4.500h14v9h-14z" fill="#fff" stroke="#fff" /><path d="M19 7h1v4h-1z" fill="#fff" />
            <path d="M1 0v3M5 0v3M0 3.500h6v2q0 2-3 2t-3-2zM3 7v4" fill="#30302b" stroke="#fff" />
          </svg>
        </button>
        <button aria-label="Сеть" className="w-[27px]">
          <svg width="17" height="17" fill="none" stroke="#aaa" strokeWidth="1.500">
            <path d="M1 16Q1 1 16 1" stroke="#777" /><path d="M5 16Q5 5 16 5" /><path d="M8.500 16q0-7 7.500-7" /><path d="M11.500 16q0-4 4.500-4" stroke="#fff" />
            <circle cx="14.500" cy="15" r="1.500" fill="#fff" stroke="none" />
          </svg>
        </button>
        <button aria-label="Звук" className="w-[33px]">
          <svg width="21" height="17" fill="none" stroke="#fff" strokeWidth="1.300">
            <path d="M1 6h3l4-4v13l-4-4H1zM11 6q2 2.500 0 5M14 4q3 4.500 0 9" /><path d="M17 2q4 6.500 0 13" stroke="#999" />
          </svg>
        </button>
        <button className="w-[30px] text-[14px]">РУС</button>
        <div className="w-[102px] text-center text-[14px] leading-[23px]">
          <div>10:51</div>
          <div>31.03.2019</div>
        </div>
        <button aria-label="Уведомления" className="relative w-[51px] pt-2 pl-[7px]">
          <svg width="33" height="32" viewBox="0 0 33 32">
            <path d="M0 1h20v17H11l-4 4v-4H0z" fill="#fff" />
            <path d="M4 5.500h12M4 9.500h12M4 13.500h8" stroke="#333" strokeWidth="1.500" />
            <circle cx="20" cy="21" r="9.500" fill="#3a3a36" stroke="#999" />
          </svg>
          <span className="absolute top-[21px] left-[23px] text-[13px] leading-4 font-semibold">2</span>
        </button>
        <span className="mr-1.5 h-[50px] w-px bg-[#777]" />
      </div>
    </div>
  );
}
